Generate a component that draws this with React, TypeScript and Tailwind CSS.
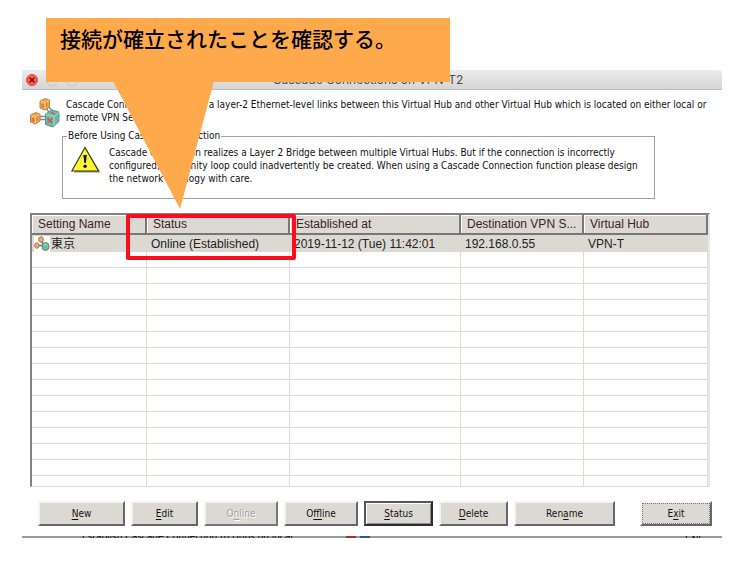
import React from "react";

type Connection = {
  name: string;
  status: string;
  established: string;
  destination: string;
  hub: string;
};

const columns = [
  { label: "Setting Name", width: "w-[115px]" },
  { label: "Status", width: "w-[143px]" },
  { label: "Established at", width: "w-[171px]" },
  { label: "Destination VPN S...", width: "w-[123px]" },
  { label: "Virtual Hub", width: "" },
];

const connections: Connection[] = [
  {
    name: "東京",
    status: "Online (Established)",
    established: "2019-11-12 (Tue) 11:42:01",
    destination: "192.168.0.55",
    hub: "VPN-T",
  },
];

const emptyRows = Array.from({ length: 15 }, (_, i) => i);

function CascadeIcon() {
  return (
    <svg className="h-[32px] w-[32px] shrink-0" viewBox="0 0 32 32" aria-hidden="true">
      <path d="M16 10l5 7M18.500 8.500l5 6M10 18.500h7M10 21.500h7" stroke="#7b83b8" strokeWidth="1.300" />
      <path d="M10 3l5-2.500 4.500 1.500v7l-4.500 3-5-2z" fill="#f0a550" stroke="#b07c45" strokeWidth="0.900" strokeLinejoin="round" />
      <path d="M10.500 3.300l4.500 1.200v6.500M15 4.500l4-2" fill="none" stroke="#f8cf8c" strokeWidth="1" />
      <path d="M11.500 6l2.500 3.500M14 6l-2.500 3.500M16.500 4.500v4" stroke="#dc5a2e" strokeWidth="0.900" />
      <path d="M0.500 17l5-2.500 4.500 1.500v7l-4.500 3-5-2z" fill="#f0a550" stroke="#b07c45" strokeWidth="0.900" strokeLinejoin="round" />
      <path d="M1 17.300l4.500 1.200v6.500M5.500 18.500l4-2" fill="none" stroke="#f8cf8c" strokeWidth="1" />
      <path d="M2 20l2.500 3.500M4.500 20l-2.500 3.500M7 18.500v4" stroke="#dc5a2e" strokeWidth="0.900" />
      <path d="M15.500 16l6.500-4 7 2v9.500l-6 5.500-7.500-2.500z" fill="#6fbaa6" stroke="#4f8f82" strokeWidth="0.900" strokeLinejoin="round" />
      <path d="M16 16.500l8 2v9.500M24 18.500l5-4" fill="none" stroke="#a3d9ca" strokeWidth="1" />
      <path d="M17.500 20l5 5M22.500 20.500l-5 4M21 14.500l4 1.500" stroke="#e0453a" strokeWidth="1.200" />
    </svg>
  );
}

function RowIcon() {
  return (
    <svg className="h-[16px] w-[16px] shrink-0 bg-white" viewBox="0 0 16 16" aria-hidden="true">
      <path d="M7 5l4 5M4 9.500h6" stroke="#6a72a8" strokeWidth="1.500" />
      <ellipse cx="7" cy="3.500" rx="2.400" ry="2.800" fill="#eeb15c" stroke="#85683f" strokeWidth="0.800" />
      <ellipse cx="2.800" cy="9.500" rx="2.200" ry="2.800" fill="#eeb15c" stroke="#85683f" strokeWidth="0.800" />
      <ellipse cx="11.500" cy="10.500" rx="3.600" ry="4" fill="#75bd9f" stroke="#44766a" strokeWidth="0.800" />
      <path d="M10 8.500q2-1 3 1" fill="none" stroke="#c4eadb" />
    </svg>
  );
}

function WarningIcon() {
  return (
    <svg className="h-[28px] w-[30px] shrink-0" viewBox="0 0 30 28" aria-hidden="true">
      <path d="M16 4L29.500 26.500H3z" fill="#8f8f8f" />
      <path d="M14 1.500L27.500 25H0.800z" fill="#fdf733" stroke="#3b3a10" strokeWidth="1.200" strokeLinejoin="round" />
      <path d="M12.400 9h3.400l-.9 8h-1.600z" fill="#111" />
      <circle cx="14.100" cy="20.300" r="1.700" fill="#111" />
    </svg>
  );
}

type ActionProps = {
  before?: string;
  hotkey: string;
  after: string;
  width: string;
  kind?: "normal" | "disabled" | "default" | "focused";
};

function ActionButton({ before = "", hotkey, after, width, kind = "normal" }: ActionProps) {
  const tone =
    kind === "disabled"
      ? "border-t-[#f4f3f0] border-l-[#f4f3f0] border-r-[#77777b] border-b-[#77777b] text-[#a5a29b] [text-shadow:1px_1px_0_#fff]"
      : kind === "default"
        ? "border-t-[#55555a] border-l-[#55555a] border-r-[#2c2c32] border-b-[#2c2c32] text-[#111] shadow-[inset_1px_1px_0_#fff,inset_-1px_-1px_0_#8b8b8b]"
        : "border-t-[#f4f3f0] border-l-[#f4f3f0] border-r-[#66666b] border-b-[#66666b] text-[#111]";
  return (
    <button
      type="button"
      disabled={kind === "disabled"}
      className={`relative h-[25px] border-2 bg-[#dcd9d2] pt-px leading-4 ${width} ${tone}`}
    >
      {before}
      <span className="underline underline-offset-2">{hotkey}</span>
      {after}
      {kind === "focused" && (
        <span className="absolute inset-0 border border-dotted border-[#77777b]" />
      )}
    </button>
  );
}

function Callout() {
  return (
    <>
      <div className="absolute top-[18px] left-[46px] h-16 w-[404px] bg-[#ffa94d] pt-1 pl-3.5 font-['Noto_Sans_CJK_JP',sans-serif] text-[21px] leading-8 font-medium text-black">
        接続が確立されたことを確認する。
      </div>
      <svg className="absolute top-[81px] left-[113px] h-32 w-[101px]" viewBox="0 0 101 128" aria-hidden="true">
        <path d="M0 0H101L67 128z" fill="#ffa94d" />
      </svg>
      <div className="absolute top-[214px] left-[126px] h-[46px] w-[170px] rounded-xs border-4 border-[#fc0d1b]" />
    </>
  );
}

export default function App() {
  return (
    <div className="relative bg-white pt-[70px] pr-[30px] pl-[22px] font-['DejaVu_Sans_Condensed','Noto_Sans_CJK_JP',sans-serif] text-[10px] text-[#111]">
      <main>
        <header className="flex h-5 items-center rounded-tr-sm border-b border-[#bdbdbd] bg-linear-to-b from-[#ebebeb] to-[#d5d5d5] pl-1">
          <div className="flex gap-2">
            <button
              type="button"
              aria-label="Close"
              className="flex h-3 w-3 items-center justify-center rounded-full border border-[#e2463f] bg-[#fc5b57]"
            >
              <svg className="h-2 w-2" viewBox="0 0 8 8" aria-hidden="true">
                <path d="M1.500 1.500l5 5M6.500 1.500l-5 5" stroke="#6d0906" strokeWidth="1.300" />
              </svg>
            </button>
            <button type="button" aria-label="Minimize" className="h-3 w-3 rounded-full border border-[#c6c6c6] bg-[#dddddd]" />
            <button type="button" aria-label="Zoom" className="h-3 w-3 rounded-full border border-[#c6c6c6] bg-[#dddddd]" />
          </div>
          <h1 className="flex-1 pr-16 text-center font-['Inter',sans-serif] text-[12px] leading-4 text-[#4c4c4c]">
            Cascade Connections on VPN-T2
          </h1>
        </header>

        <section className="flex gap-1 pt-2 pl-2">
          <CascadeIcon />
          <p className="leading-[13px] whitespace-nowrap">
            Cascade Connections establish a layer-2 Ethernet-level links between this Virtual Hub and other Virtual Hub which is located on either local or
            <br />
            remote VPN Servers.
          </p>
        </section>

        <fieldset className="mr-[67px] ml-10 h-[69px] min-w-0 border border-[#a0a0a0] pl-1">
          <legend className="px-px leading-3">Before Using Cascade Connection</legend>
          <div className="flex gap-2 pt-1 pl-1">
            <WarningIcon />
            <p className="leading-[13px] whitespace-nowrap">
              Cascade Connection realizes a Layer 2 Bridge between multiple Virtual Hubs. But if the connection is incorrectly
              <br />
              configured, an infinity loop could inadvertently be created. When using a Cascade Connection function please design
              <br />
              the network topology with care.
            </p>
          </div>
        </fieldset>

        <div className="mt-3.5 mr-3 ml-2 h-[274px] overflow-hidden border-t-2 border-r-2 border-b border-l-2 border-t-[#828286] border-r-[#e8e7e2] border-b-[#dddcd6] border-l-[#828286] font-['Liberation_Sans','Noto_Sans_CJK_JP',sans-serif] text-[12px]">
          <table className="w-full table-fixed border-separate border-spacing-0">
            <thead>
              <tr>
                {columns.map((c) => (
                  <th
                    key={c.label}
                    className={`h-5 border-r-2 border-b-2 border-[#77777b] bg-[#dcd9d2] p-0 pl-1.5 text-left leading-4 font-normal whitespace-nowrap text-[#3b2226] shadow-[inset_1px_1px_0_#fff] ${c.width}`}
                  >
                    {c.label}
                  </th>
                ))}
              </tr>
            </thead>
            <tbody>
              {connections.map((c) => (
                <tr key={c.name} className="bg-[#dcd9d2] text-[#222]">
                  <td className="h-[17px] p-0">
                    <div className="flex items-center gap-px pl-0.5 leading-4">
                      <RowIcon />
                      {c.name}
                    </div>
                  </td>
                  <td className="p-0 pl-1 leading-4 whitespace-nowrap">{c.status}</td>
                  <td className="p-0 pl-1 leading-4 whitespace-nowrap">{c.established}</td>
                  <td className="p-0 pl-1 leading-4 whitespace-nowrap">{c.destination}</td>
                  <td className="p-0 pl-1 leading-4 whitespace-nowrap">{c.hub}</td>
                </tr>
              ))}
              {emptyRows.map((r) => (
                <tr key={r}>
                  {columns.map((c) => (
                    <td key={c.label} className="h-4 border-r border-b border-[#dddcd6] p-0" />
                  ))}
                </tr>
              ))}
            </tbody>
          </table>
        </div>

        <footer className="flex gap-1.5 pt-3.5 pr-2.5 pb-2.5 pl-4">
          <ActionButton hotkey="N" after="ew" width="w-[87px]" />
          <ActionButton hotkey="E" after="dit" width="w-[67px]" />
          <ActionButton before="O" hotkey="n" after="line" width="w-[74px]" kind="disabled" />
          <ActionButton before="O" hotkey="f" after="fline" width="w-[74px]" />
          <ActionButton hotkey="S" after="tatus" width="w-[69px]" kind="default" />
          <ActionButton hotkey="D" after="elete" width="w-[69px]" />
          <ActionButton before="Ren" hotkey="a" after="me" width="w-[101px]" />
          <ActionButton before="E" hotkey="x" after="it" width="w-[72px] ml-auto" kind="focused" />
        </footer>
      </main>
      <div className="flex h-0.5 items-center overflow-hidden bg-[#9a9a9a] pl-[60px] leading-3 whitespace-nowrap text-black">
        <span className="w-[264px]">Establish Cascade Connection to Hubs on local</span>
        <span className="h-0.5 w-2.5 bg-[#b02a20]" />
        <span className="ml-1 h-0.5 w-2.5 bg-[#2458a6]" />
        <span className="mr-5 ml-auto">Exit</span>
      </div>
      <Callout />
    </div>
  );
}
